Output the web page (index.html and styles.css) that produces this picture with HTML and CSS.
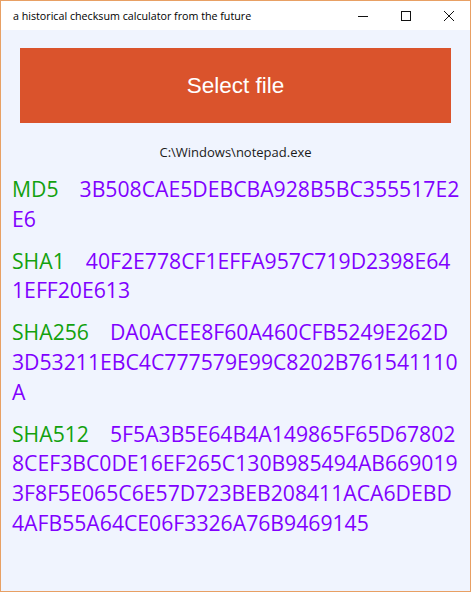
FILE: index.html
```html
<!DOCTYPE html>
<html lang="en">
<head>
<meta charset="utf-8">
<title>a historical checksum calculator from the future</title>
<link rel="stylesheet" href="styles.css">
</head>
<body>
<div class="window">
  <header class="titlebar">
    <span class="title">a historical checksum calculator from the future</span>
    <div class="controls">
      <span class="ctrl"><svg width="10" height="10" viewBox="0 0 10 10"><line x1="0" y1="5.5" x2="10" y2="5.5" stroke="#111" stroke-width="1"/></svg></span>
      <span class="ctrl"><svg width="10" height="10" viewBox="0 0 10 10"><rect x="0.5" y="0.5" width="9" height="9" fill="none" stroke="#111" stroke-width="1"/></svg></span>
      <span class="ctrl"><svg width="10" height="10" viewBox="0 0 10 10"><path d="M0 0 L10 10 M10 0 L0 10" stroke="#111" stroke-width="1"/></svg></span>
    </div>
  </header>
  <main class="content">
    <button class="select">Select file</button>
    <p class="path">C:\Windows\notepad.exe</p>
    <dl class="hashes">
      <div class="hash"><dt>MD5</dt><dd>3B508CAE5DEBCBA928B5BC355517E2<br>E6</dd></div>
      <div class="hash"><dt>SHA1</dt><dd>40F2E778CF1EFFA957C719D2398E64<br>1EFF20E613</dd></div>
      <div class="hash"><dt>SHA256</dt><dd>DA0ACEE8F60A460CFB5249E262D<br>3D53211EBC4C777579E99C8202B761541110<br>A</dd></div>
      <div class="hash"><dt>SHA512</dt><dd>5F5A3B5E64B4A149865F65D67802<br>8CEF3BC0DE16EF265C130B985494AB669019<br>3F8F5E065C6E57D723BEB208411ACA6DEBD<br>4AFB55A64CE06F3326A76B9469145</dd></div>
    </dl>
  </main>
</div>
</body>
</html>
```
FILE: styles.css
```css
* { box-sizing: border-box; }
html, body { margin: 0; padding: 0; }
body { background: #F0F4FE; }

.window {
  width: 471px;
  height: 592px;
  border: 1px solid #E8A064;
  display: flex;
  flex-direction: column;
  background: #F0F4FE;
  overflow: hidden;
}

.titlebar {
  height: 29px;
  background: #ffffff;
  display: flex;
  align-items: center;
  justify-content: space-between;
  flex: none;
}
.title {
  padding-left: 12px;
  font-family: "Open Sans", "Noto Sans", sans-serif;
  font-size: 10.7px;
  color: #000;
  white-space: nowrap;
}
.controls { display: flex; height: 100%; }
.ctrl {
  width: 43px;
  height: 100%;
  display: flex;
  align-items: center;
  justify-content: center;
}
.ctrl svg { display: block; }

.content {
  flex: 1;
  padding-top: 18px;
  display: flex;
  flex-direction: column;
}

.select {
  margin: 0 19px;
  height: 75px;
  border: none;
  background: #DA532C;
  color: #ffffff;
  font-family: "Liberation Sans", Arial, sans-serif;
  font-size: 22.5px;
  padding: 0;
}

.path {
  margin: 20px 0 0;
  text-align: center;
  font-family: "Open Sans", "Noto Sans", sans-serif;
  font-size: 13px;
  line-height: 18px;
  color: #1a1a1a;
}

.hashes {
  margin: 13px 0 0;
  padding: 0 11px;
  font-family: "Open Sans", "Noto Sans", sans-serif;
  font-size: 21.2px;
  line-height: 29.8px;
}
.hash { margin-bottom: 12px; white-space: nowrap; }
.hash dt {
  display: inline;
  color: #13A10E;
  margin-right: 21px;
}
.hash dd {
  display: inline;
  margin: 0;
  color: #8000FF;
}
```
